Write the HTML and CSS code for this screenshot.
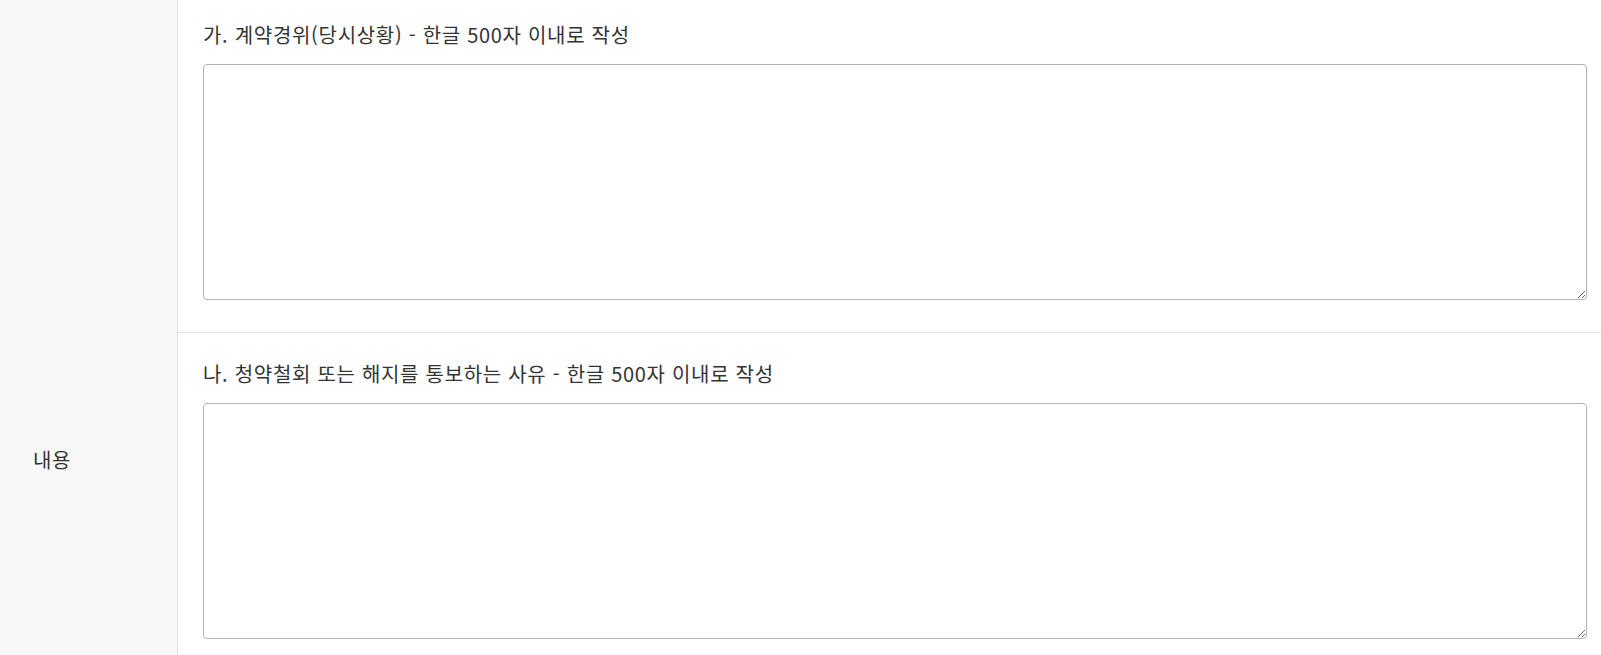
FILE: index.html
```html
<!DOCTYPE html>
<html lang="ko">
<head>
<meta charset="utf-8">
<title>내용</title>
<link rel="stylesheet" href="styles.css">
</head>
<body>
<div class="form">
  <div class="side"><span class="side-label">내용</span></div>
  <div class="main">
    <div class="row row-first">
      <label class="q" for="t1">가. 계약경위(당시상황) - 한글 500자 이내로 작성</label>
      <textarea id="t1" class="box"></textarea>
    </div>
    <div class="row row-second">
      <label class="q" for="t2">나. 청약철회 또는 해지를 통보하는 사유 - 한글 500자 이내로 작성</label>
      <textarea id="t2" class="box"></textarea>
    </div>
  </div>
</div>
</body>
</html>
```
FILE: styles.css
```css
html, body {
  margin: 0;
  padding: 0;
  height: 655px;
  overflow: hidden;
  background: #ffffff;
}
body {
  font-family: "Noto Sans CJK KR", "Noto Sans", sans-serif;
  color: #333333;
}
.form {
  display: grid;
  grid-template-columns: 178px 1fr;
  min-height: 700px;
}
.side {
  background: #f8f8f8;
  border-right: 1px solid #e0e0e0;
  padding: 447px 0 0 33px;
}
.side-label {
  font-size: 20px;
  line-height: 26px;
  letter-spacing: 0.7px;
}
.main {
  display: flex;
  flex-direction: column;
}
.row {
  display: flex;
  flex-direction: column;
  padding: 22px 14px 32px 25px;
}
.row-second {
  border-top: 1px solid #e3e3e3;
  padding-top: 28px;
}
.q {
  font-size: 20px;
  line-height: 26px;
  letter-spacing: 0.7px;
  margin-bottom: 16px;
}
.box {
  box-sizing: border-box;
  width: 100%;
  height: 236px;
  border: 1px solid #b3b3b3;
  border-radius: 4px;
  background: #ffffff;
  margin: 0;
  padding: 8px;
  font: inherit;
}
```
